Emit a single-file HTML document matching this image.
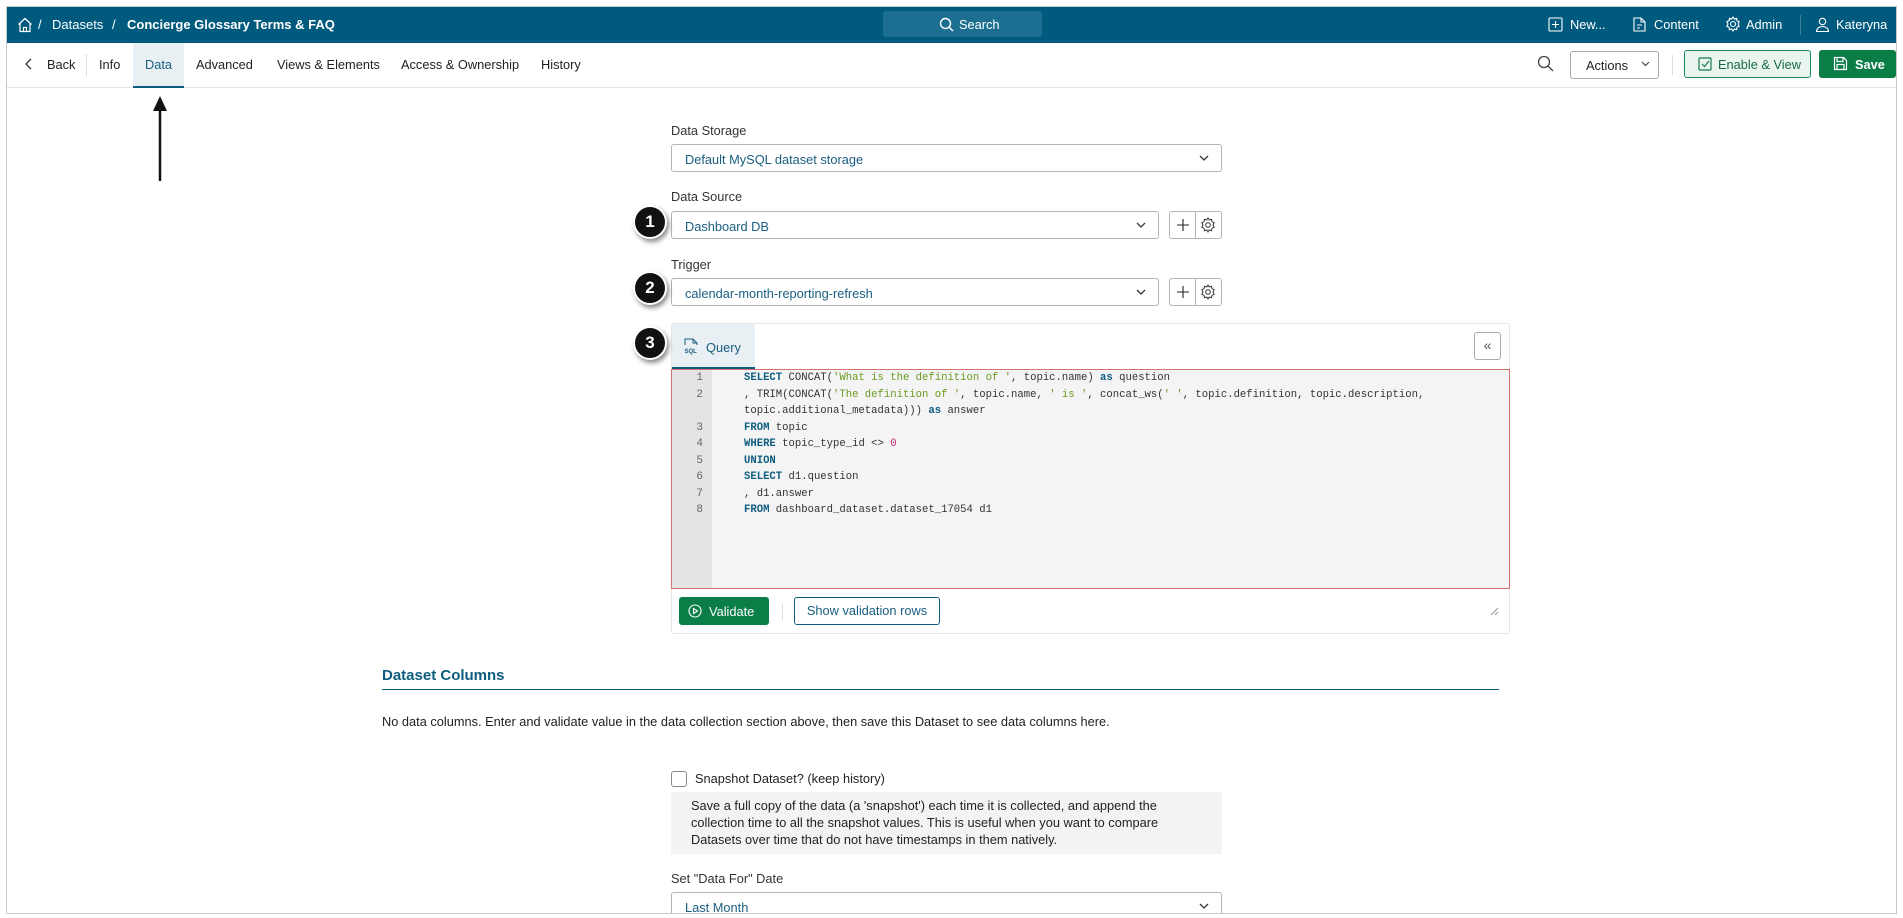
<!DOCTYPE html>
<html><head><meta charset="utf-8">
<style>
*{box-sizing:border-box;margin:0;padding:0}
body{width:1903px;height:918px;background:#fff;font-family:"Liberation Sans",sans-serif;font-size:12.8px;color:#222;position:relative;overflow:hidden}
.frame{position:absolute;left:6px;top:6px;width:1891px;height:908px;border:1px solid #c8c8c8;overflow:hidden}
.a{position:absolute;white-space:nowrap}
.hdr{position:absolute;left:0;top:0;width:1891px;height:36px;background:#005a7d;color:#fff}
.tabs{position:absolute;left:0;top:36px;width:1891px;height:45px;border-bottom:1px solid #e4e4e4}
.sel{position:absolute;border:1px solid #b5b5b5;border-radius:3px;height:28px;color:#1a5e80;padding:7px 13px;font-size:12.8px}
.sel svg{position:absolute;right:12px;top:10px}
.lbl{position:absolute;font-size:12.8px;color:#333}
.ib{position:absolute;width:27px;height:28px;border:1px solid #b5b5b5;display:flex;align-items:center;justify-content:center}
.badge{position:absolute;width:34px;height:34px;border-radius:50%;background:#111;color:#fff;font-weight:bold;font-size:17px;display:flex;align-items:center;justify-content:center;box-shadow:2px 3px 5px rgba(0,0,0,.45);border:2px solid #fff}
.code{position:absolute;font-family:"Liberation Mono",monospace;font-size:10.6px;color:#333;line-height:16.5px}
.k{color:#0e5d7f;font-weight:bold}.s{color:#6a9a1f}.n{color:#c0266e}
.ln{position:absolute;font-family:"Liberation Mono",monospace;font-size:11px;color:#666;text-align:right;width:22px}
</style></head><body>
<div class="frame">
<div class="hdr">
<svg class="a" style="left:10px;top:10px" width="16" height="16" viewBox="0 0 16 16" fill="none" stroke="#fff" stroke-width="1.2"><path d="M1.5 7.5L8 1.5l6.5 6M3 6.5V14.5h10V6.5M6.5 14.5v-4h3v4"/></svg>
<span class="a" style="left:31px;top:10px;font-size:13px">/</span>
<span class="a" style="left:45px;top:10px;font-size:13px">Datasets</span>
<span class="a" style="left:105px;top:10px;font-size:13px">/</span>
<span class="a" style="left:120px;top:10px;font-size:13px;font-weight:bold">Concierge Glossary Terms &amp; FAQ</span>
<div class="a" style="left:876px;top:4px;width:159px;height:26px;background:#1d6f91;border-radius:3px"></div>
<svg class="a" style="left:932px;top:10px" width="15" height="15" viewBox="0 0 15 15" fill="none" stroke="#fff" stroke-width="1.4"><circle cx="6.5" cy="6.5" r="5"/><path d="M10.2 10.2L14 14"/></svg>
<span class="a" style="left:952px;top:10px">Search</span>
<svg class="a" style="left:1541px;top:10px" width="15" height="15" viewBox="0 0 15 15" fill="none" stroke="#fff" stroke-width="1.1"><rect x="1" y="1" width="13" height="13" rx="1"/><path d="M7.5 4v7M4 7.5h7"/></svg>
<span class="a" style="left:1563px;top:10px">New...</span>
<svg class="a" style="left:1625px;top:10px" width="15" height="15" viewBox="0 0 15 15" fill="none" stroke="#fff" stroke-width="1.1"><path d="M2 1h7l4 4v9H2zM9 1v4h4M5 8h5M5 11h3"/></svg>
<span class="a" style="left:1647px;top:10px">Content</span>
<svg class="a" style="left:1718px;top:9px" width="16" height="16" viewBox="0 0 16 16" fill="none" stroke="#fff" stroke-width="1.1"><circle cx="8" cy="8" r="2.5"/><path d="M8 1l1.3 2 2.3-.7.4 2.4 2.2 1L13 8l1.2 2.3-2.2 1-.4 2.4-2.3-.7L8 15l-1.3-2-2.3.7-.4-2.4-2.2-1L3 8 1.8 5.7l2.2-1 .4-2.4 2.3.7z"/></svg>
<span class="a" style="left:1739px;top:10px">Admin</span>
<div class="a" style="left:1793px;top:8px;width:1px;height:20px;background:#3f7f9c"></div>
<svg class="a" style="left:1808px;top:10px" width="15" height="15" viewBox="0 0 15 15" fill="none" stroke="#fff" stroke-width="1.1"><circle cx="7.5" cy="4.5" r="3.2"/><path d="M1.5 14.5c0-3 2.5-5 6-5s6 2 6 5z"/></svg>
<span class="a" style="left:1829px;top:10px">Kateryna</span>
</div>
<div class="tabs">
<svg class="a" style="left:17px;top:15px" width="10" height="12" viewBox="0 0 10 12" fill="none" stroke="#333" stroke-width="1.3"><path d="M7 1L2 6l5 5"/></svg>
<span class="a" style="left:40px;top:14px">Back</span>
<div class="a" style="left:79px;top:11px;width:1px;height:22px;background:#ddd"></div>
<span class="a" style="left:92px;top:14px">Info</span>
<div class="a" style="left:126px;top:0;width:51px;height:45px;background:#e9f0f4;border-bottom:2px solid #0e5d7f"></div>
<span class="a" style="left:138px;top:14px;color:#1a5e80">Data</span>
<span class="a" style="left:189px;top:14px">Advanced</span>
<span class="a" style="left:270px;top:14px">Views &amp; Elements</span>
<span class="a" style="left:394px;top:14px">Access &amp; Ownership</span>
<span class="a" style="left:534px;top:14px">History</span>
<svg class="a" style="left:1530px;top:12px" width="17" height="17" viewBox="0 0 17 17" fill="none" stroke="#444" stroke-width="1.3"><circle cx="7" cy="7" r="5.5"/><path d="M11 11l5 5"/></svg>
<div class="a" style="left:1563px;top:8px;width:89px;height:28px;border:1px solid #aaa;border-radius:3px"></div>
<span class="a" style="left:1579px;top:15px">Actions</span>
<svg class="a" style="left:1634px;top:18px" width="9" height="6" viewBox="0 0 9 6" fill="none" stroke="#444" stroke-width="1.2"><path d="M1 1l3.5 3.5L8 1"/></svg>
<div class="a" style="left:1665px;top:12px;width:1px;height:20px;background:#ddd"></div>
<div class="a" style="left:1677px;top:7px;width:127px;height:28px;border:1px solid #1a8a56;border-radius:3px;background:#eaf5ef"></div>
<svg class="a" style="left:1691px;top:14px" width="14" height="14" viewBox="0 0 14 14" fill="none" stroke="#1a7a4e" stroke-width="1.2"><rect x="1" y="1" width="12" height="12" rx="1"/><path d="M4 7l2.5 2.5L11 4"/></svg>
<span class="a" style="left:1711px;top:14px;color:#1a6b45">Enable &amp; View</span>
<div class="a" style="left:1812px;top:7px;width:77px;height:28px;background:#0b7d47;border-radius:3px"></div>
<svg class="a" style="left:1826px;top:13px" width="15" height="15" viewBox="0 0 15 15" fill="none" stroke="#fff" stroke-width="1.2"><path d="M1.5 1.5h9l3 3v9h-12z M4 1.5v4h6v-4 M4 13.5v-5h7v5"/></svg>
<span class="a" style="left:1848px;top:14px;color:#fff;font-weight:bold">Save</span>
</div>
<svg class="a" style="left:143px;top:88px" width="20" height="86" viewBox="0 0 20 86"><path d="M10 6v80" stroke="#111" stroke-width="2.5"/><path d="M3 16L10 1l7 15z" fill="#111"/></svg>

<div class="lbl" style="left:664px;top:116px">Data Storage</div>
<div class="sel" style="left:664px;top:137px;width:551px">Default MySQL dataset storage<svg width="10" height="6" viewBox="0 0 10 6" fill="none" stroke="#333" stroke-width="1.3"><path d="M1 1l4 4 4-4"/></svg></div>

<div class="lbl" style="left:664px;top:182px">Data Source</div>
<div class="sel" style="left:664px;top:204px;width:488px">Dashboard DB<svg width="10" height="6" viewBox="0 0 10 6" fill="none" stroke="#333" stroke-width="1.3"><path d="M1 1l4 4 4-4"/></svg></div>
<div class="ib" style="left:1162px;top:204px;border-radius:3px 0 0 3px"><svg width="12" height="12" viewBox="0 0 12 12" stroke="#222" stroke-width="1.1"><path d="M6 0v12M0 6h12"/></svg></div>
<div class="ib" style="left:1188px;top:204px;border-radius:0 3px 3px 0;border-left:none"><svg width="16" height="16" viewBox="0 0 16 16" fill="none" stroke="#333" stroke-width="1"><circle cx="8" cy="8" r="2.3"/><path d="M8 1l1.3 2 2.3-.7.4 2.4 2.2 1L13 8l1.2 2.3-2.2 1-.4 2.4-2.3-.7L8 15l-1.3-2-2.3.7-.4-2.4-2.2-1L3 8 1.8 5.7l2.2-1 .4-2.4 2.3.7z"/></svg></div>
<div class="badge" style="left:626px;top:198px">1</div>

<div class="lbl" style="left:664px;top:250px">Trigger</div>
<div class="sel" style="left:664px;top:271px;width:488px">calendar-month-reporting-refresh<svg width="10" height="6" viewBox="0 0 10 6" fill="none" stroke="#333" stroke-width="1.3"><path d="M1 1l4 4 4-4"/></svg></div>
<div class="ib" style="left:1162px;top:271px;border-radius:3px 0 0 3px"><svg width="12" height="12" viewBox="0 0 12 12" stroke="#222" stroke-width="1.1"><path d="M6 0v12M0 6h12"/></svg></div>
<div class="ib" style="left:1188px;top:271px;border-radius:0 3px 3px 0;border-left:none"><svg width="16" height="16" viewBox="0 0 16 16" fill="none" stroke="#333" stroke-width="1"><circle cx="8" cy="8" r="2.3"/><path d="M8 1l1.3 2 2.3-.7.4 2.4 2.2 1L13 8l1.2 2.3-2.2 1-.4 2.4-2.3-.7L8 15l-1.3-2-2.3.7-.4-2.4-2.2-1L3 8 1.8 5.7l2.2-1 .4-2.4 2.3.7z"/></svg></div>
<div class="badge" style="left:626px;top:264px">2</div>

<div class="a" style="left:664px;top:316px;width:839px;height:311px;border:1px solid #e6e6e6;border-radius:3px"></div>
<div class="a" style="left:665px;top:317px;width:83px;height:45px;background:#e9f0f4;border-bottom:2px solid #0e5d7f"></div>
<svg class="a" style="left:677px;top:331px" width="14" height="17" viewBox="0 0 14 17" fill="none" stroke="#1a5e80" stroke-width="1"><path d="M1 7V1h8l4 4v2M9 1v4h4"/><text x="0.5" y="15" font-size="6" font-family="Liberation Sans" fill="#1a5e80" stroke="none" font-weight="bold">SQL</text></svg>
<span class="a" style="left:699px;top:333px;color:#1a5e80">Query</span>
<div class="a" style="left:1467px;top:325px;width:27px;height:28px;border:1px solid #aaa;border-radius:3px;text-align:center;line-height:24px;color:#555;font-size:14px">«</div>
<div class="badge" style="left:626px;top:319px">3</div>
<div class="a" style="left:664px;top:362px;width:839px;height:220px;background:#f4f4f4;border:1px solid #d87070"></div>
<div class="a" style="left:665px;top:363px;width:40px;height:218px;background:#e4e4e4"></div>
<div class="ln" style="left:674px;top:363px;line-height:16.5px">1<br>2<br>&nbsp;<br>3<br>4<br>5<br>6<br>7<br>8</div>
<div class="code" style="left:737px;top:363px">
<span class="k">SELECT</span> CONCAT(<span class="s">'What is the definition of '</span>, topic.name) <span class="k">as</span> question<br>
, TRIM(CONCAT(<span class="s">'The definition of '</span>, topic.name, <span class="s">' is '</span>, concat_ws(<span class="s">' '</span>, topic.definition, topic.description,<br>
topic.additional_metadata))) <span class="k">as</span> answer<br>
<span class="k">FROM</span> topic<br>
<span class="k">WHERE</span> topic_type_id &lt;&gt; <span class="n">0</span><br>
<span class="k">UNION</span><br>
<span class="k">SELECT</span> d1.question<br>
,  d1.answer<br>
<span class="k">FROM</span> dashboard_dataset.dataset_17054 d1
</div>
<div class="a" style="left:672px;top:590px;width:90px;height:28px;background:#0b7d47;border-radius:3px"></div>
<svg class="a" style="left:681px;top:597px" width="14" height="14" viewBox="0 0 14 14" fill="none" stroke="#fff" stroke-width="1.1"><circle cx="7" cy="7" r="6"/><path d="M5.5 4.5v5l4-2.5z"/></svg>
<span class="a" style="left:702px;top:597px;color:#fff">Validate</span>
<div class="a" style="left:775px;top:597px;width:1px;height:16px;background:#ddd"></div>
<div class="a" style="left:787px;top:590px;width:146px;height:28px;border:1px solid #0e5d7f;border-radius:3px;color:#1a5e80;text-align:center;line-height:26px">Show validation rows</div>
<svg class="a" style="left:1482px;top:599px" width="10" height="10" viewBox="0 0 10 10" stroke="#999" stroke-width="1"><path d="M9 2L2 9M9 6L6 9"/></svg>

<div class="a" style="left:375px;top:660px;font-size:15px;font-weight:bold;color:#0e5d7f">Dataset Columns</div>
<div class="a" style="left:375px;top:682px;width:1117px;height:1px;background:#0e5d7f"></div>
<div class="a" style="left:375px;top:707px">No data columns. Enter and validate value in the data collection section above, then save this Dataset to see data columns here.</div>

<div class="a" style="left:664px;top:764px;width:16px;height:16px;border:1px solid #888;border-radius:3px"></div>
<span class="a" style="left:688px;top:764px">Snapshot Dataset? (keep history)</span>
<div class="a" style="left:664px;top:785px;width:551px;height:62px;background:#f3f3f3"></div>
<div class="a" style="left:684px;top:790px;line-height:17px;white-space:normal;width:500px">Save a full copy of the data (a 'snapshot') each time it is collected, and append the collection time to all the snapshot values. This is useful when you want to compare Datasets over time that do not have timestamps in them natively.</div>
<div class="lbl" style="left:664px;top:864px">Set "Data For" Date</div>
<div class="sel" style="left:664px;top:885px;width:551px">Last Month<svg width="10" height="6" viewBox="0 0 10 6" fill="none" stroke="#333" stroke-width="1.3"><path d="M1 1l4 4 4-4"/></svg></div>
</div>
</body></html>
